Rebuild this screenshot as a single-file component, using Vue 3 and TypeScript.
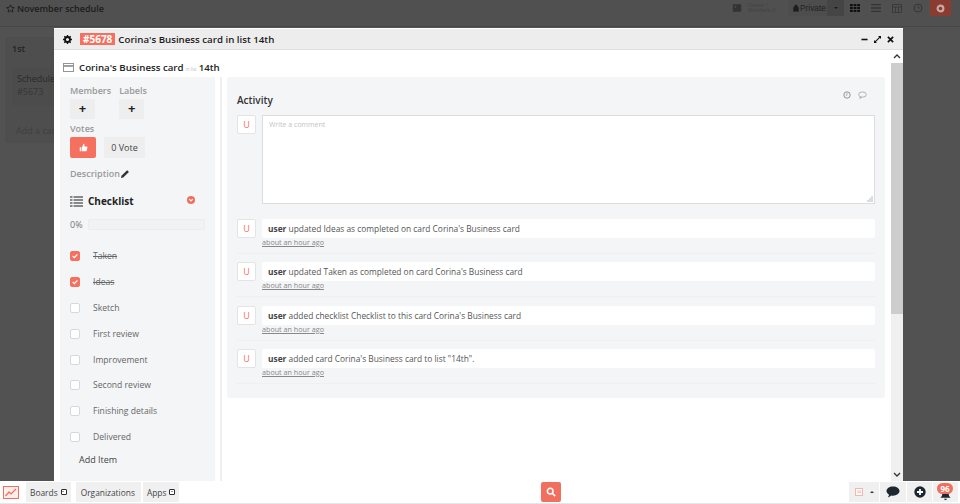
<script setup lang="ts">
const checklist = [
  { label: 'Taken', done: true },
  { label: 'Ideas', done: true },
  { label: 'Sketch', done: false },
  { label: 'First review', done: false },
  { label: 'Improvement', done: false },
  { label: 'Second review', done: false },
  { label: 'Finishing details', done: false },
  { label: 'Delivered', done: false },
]

const activity = [
  'updated Ideas as completed on card Corina\'s Business card',
  'updated Taken as completed on card Corina\'s Business card',
  'added checklist Checklist to this card Corina\'s Business card',
  'added card Corina\'s Business card to list "14th".',
]
</script>

<template>
  <div class="page">
    <header class="topbar">
      <div class="board-title">
        <svg class="star" viewBox="0 0 16 16" width="9" height="9"><path d="M8 1.500l2 4.300 4.700.6-3.400 3.200.9 4.700L8 11.900l-4.200 2.400.9-4.700L1.300 6.400 6 5.800z" fill="none" stroke="#1c1c1c" stroke-width="1.500"/></svg>
        <span>November schedule</span>
      </div>
      <div class="top-tools">
        <svg class="faint-icon" viewBox="0 0 12 12" width="10" height="10"><rect x="1" y="1.500" width="10" height="9" fill="#333"/><rect x="3" y="3.500" width="2" height="2" fill="#4e4e4e"/></svg>
        <div class="members">Owner: 1<br />Members: 0</div>
        <div class="private">
          <svg viewBox="0 0 10 12" width="6" height="8"><path d="M2.500 5V3.500a2.500 2.500 0 0 1 5 0V5M1 5h8v6.500H1z" fill="#1e1e1e" stroke="#1e1e1e"/></svg>
          <span>Private</span>
        </div>
        <div class="caret-box"><i class="caret"></i></div>
        <svg class="tool on" viewBox="0 0 10 8" width="10" height="8"><path d="M0 0h2.800v2.200H0zM3.600 0h2.800v2.200H3.600zM7.200 0H10v2.200H7.200zM0 2.900h2.800v2.200H0zM3.600 2.900h2.800v2.200H3.600zM7.200 2.900H10v2.200H7.200zM0 5.800h2.800V8H0zM3.600 5.800h2.800V8H3.600zM7.200 5.800H10V8H7.200z" fill="#111"/></svg>
        <svg class="tool" viewBox="0 0 10 8" width="10" height="8"><path d="M0 .5h10M0 4h10M0 7.500h10" stroke="#353535" stroke-width="1.300"/></svg>
        <svg class="tool" viewBox="0 0 10 10" width="10" height="10"><path d="M.5 1.500h9v8h-9zM.5 4h9M3.500 4v5.500M6.500 4v5.500" fill="none" stroke="#353535" stroke-width=".8"/></svg>
        <svg class="tool" viewBox="0 0 10 10" width="10" height="10"><circle cx="5" cy="5" r="4" fill="none" stroke="#353535"/><path d="M5 2.500V5h2" fill="none" stroke="#353535" stroke-width=".8"/></svg>
        <div class="gear-btn">
          <svg viewBox="0 0 10 10" width="9" height="9"><circle cx="5" cy="5" r="3.200" fill="none" stroke="#c9a8a3" stroke-width="2.400"/></svg>
        </div>
      </div>
    </header>

    <div class="board">
      <section class="list">
        <h3>1st</h3>
        <div class="card">Schedule<br /><span class="card-no">#5673</span></div>
        <div class="add-card">Add a card</div>
      </section>
    </div>

    <footer class="bottombar">
      <div class="foot-left">
        <div class="logo">
          <svg viewBox="0 0 16 13" width="16" height="13"><rect x=".5" y=".5" width="15" height="12" fill="#fdeeec" stroke="#f16f5e"/><path d="M2.500 10l3.500-4 2 2 5-5" fill="none" stroke="#f16f5e" stroke-width="1.200"/></svg>
        </div>
        <div class="foot-btn">Boards <i class="drop-icon"></i></div>
        <div class="foot-btn">Organizations</div>
        <div class="foot-btn">Apps <i class="drop-icon"></i></div>
      </div>
      <div class="search-btn">
        <svg viewBox="0 0 12 12" width="10" height="10"><circle cx="5" cy="5" r="3.400" fill="none" stroke="#fff" stroke-width="1.800"/><path d="M7.500 7.500L11 11" stroke="#fff" stroke-width="2"/></svg>
      </div>
      <div class="foot-right">
        <div class="user-box"><span class="mini-u">u</span><i class="mini-caret"></i></div>
        <div class="foot-icon chat">
          <svg viewBox="0 0 14 12" width="14" height="12"><path d="M7 .5c3.600 0 6.500 2 6.500 4.600S10.600 9.700 7 9.700c-.7 0-1.300-.1-1.900-.2C4 10.600 2.800 11.200 1.800 11.300c.8-.8 1.200-1.700 1.200-2.600C1.500 7.800.5 6.600.5 5.100.5 2.500 3.400.5 7 .5z" fill="#1d2730"/></svg>
        </div>
        <div class="foot-icon">
          <svg viewBox="0 0 12 12" width="12" height="12"><circle cx="6" cy="6" r="5.700" fill="#1d2730"/><path d="M6 3v6M3 6h6" stroke="#fff" stroke-width="1.800"/></svg>
        </div>
        <div class="foot-icon bell">
          <svg viewBox="0 0 14 13" width="13" height="12"><path d="M7 1c2.500 0 3.500 2 3.500 4.500 0 2 1 3 2 4H1.500c1-1 2-2 2-4C3.500 3 4.500 1 7 1zM5.500 10.500h3a1.500 1.500 0 0 1-3 0z" fill="#1d2730"/></svg>
          <span class="badge">96</span>
        </div>
      </div>
    </footer>

    <div class="modal">
      <div class="modal-head">
        <svg class="cog" viewBox="0 0 12 12" width="9" height="9"><circle cx="6" cy="6" r="3.300" fill="none" stroke="#111" stroke-width="2.500"/><path d="M6 0v2.500M6 9.500V12M0 6h2.500M9.500 6H12M1.800 1.800l1.800 1.800M8.400 8.400l1.800 1.800M1.800 10.200l1.800-1.800M8.400 3.600l1.800-1.800" stroke="#111" stroke-width="1.800"/></svg>
        <span class="card-id">#5678</span>
        <span class="head-title">Corina's Business card in list 14th</span>
        <div class="win-btns">
          <svg viewBox="0 0 8 8" width="7" height="7"><path d="M.5 4h7" stroke="#111" stroke-width="1.800"/></svg>
          <svg viewBox="0 0 8 8" width="7" height="7"><path d="M1 7l6-6" stroke="#111" stroke-width="1.300"/><path d="M4.600 0H8v3.400zM0 4.600V8h3.400z" fill="#111"/></svg>
          <svg viewBox="0 0 8 8" width="7" height="7"><path d="M1 1l6 6M7 1L1 7" stroke="#111" stroke-width="2"/></svg>
        </div>
      </div>

      <div class="modal-body">
        <div class="scroll-area">
          <div class="card-title">
            <svg viewBox="0 0 12 10" width="11" height="9"><rect x=".5" y=".5" width="11" height="9" fill="none" stroke="#8a8a8a"/><rect x="1" y="2.400" width="10" height="1.800" fill="#8a8a8a"/></svg>
            <span class="name">Corina's Business card</span><span class="in-list">in list</span><span class="name">14th</span>
          </div>

          <div class="columns">
            <aside class="side">
              <div class="pick-row">
                <div class="pick">
                  <div class="side-label">Members</div>
                  <div class="plus">+</div>
                </div>
                <div class="pick">
                  <div class="side-label">Labels</div>
                  <div class="plus">+</div>
                </div>
              </div>
              <div class="side-label votes">Votes</div>
              <div class="vote-row">
                <div class="vote-btn">
                  <svg viewBox="0 0 12 12" width="9" height="9"><path d="M1 5.500h2.200V11H1zM4 5.500L6 1c1 0 1.500.8 1.300 1.800L7 4.500h3.300c.7 0 1 .6.900 1.200l-.8 4.300c-.1.600-.5 1-1.100 1H4z" fill="#fff"/></svg>
                </div>
                <div class="vote-count">0 Vote</div>
              </div>
              <div class="desc">
                <span class="side-label">Description</span>
                <svg viewBox="0 0 10 10" width="8" height="8"><path d="M0 10l.6-2.800L7 .8a1 1 0 0 1 1.400 0l.8.8a1 1 0 0 1 0 1.400L2.800 9.400z" fill="#333"/></svg>
              </div>
              <div class="check-head">
                <svg viewBox="0 0 13 11" width="13" height="11"><path d="M0 1h2.500M3.500 1H13M0 4h2.500M3.500 4H13M0 7h2.500M3.500 7H13M0 10h2.500M3.500 10H13" stroke="#666" stroke-width="1.500"/></svg>
                <span>Checklist</span>
                <svg class="chev" viewBox="0 0 8 8" width="8" height="8"><circle cx="4" cy="4" r="4" fill="#f16f5e"/><path d="M2.200 3.200L4 5l1.800-1.800" fill="none" stroke="#fff" stroke-width="1.100"/></svg>
              </div>
              <div class="progress">
                <span>0%</span>
                <div class="track"></div>
              </div>
              <ul class="items">
                <li v-for="item in checklist" :key="item.label">
                  <span class="box" :class="{ checked: item.done }">
                    <svg v-if="item.done" viewBox="0 0 10 10" width="8" height="8"><path d="M2 5l2.200 2L8 3" fill="none" stroke="#fff" stroke-width="1.600"/></svg>
                  </span>
                  <span class="item-label" :class="{ struck: item.done }">{{ item.label }}</span>
                </li>
              </ul>
              <div class="add-item">Add Item</div>
            </aside>

            <div class="divider"></div>

            <main class="activity">
              <div class="activity-head">
                <h4>Activity</h4>
                <svg viewBox="0 0 10 10" width="8" height="8"><circle cx="5" cy="5" r="4" fill="none" stroke="#888" stroke-width="1.100"/><path d="M5 2.500V5L3.500 6" fill="none" stroke="#888" stroke-width=".8"/></svg>
                <svg viewBox="0 0 10 9" width="9" height="8"><ellipse cx="5" cy="4" rx="4.300" ry="3" fill="none" stroke="#999" stroke-width=".8"/><path d="M2.500 6.500L2 8.500l2.200-1.500" fill="none" stroke="#999" stroke-width=".8"/></svg>
              </div>
              <div class="comment-row">
                <div class="avatar">U</div>
                <div class="comment-box">
                  <span>Write a comment</span>
                  <svg class="grip" viewBox="0 0 6 6" width="6" height="6"><path d="M5 1v0M3 3v0M5 3v0M1 5v0M3 5v0M5 5v0" stroke="#777" stroke-width="1" stroke-linecap="square"/></svg>
                </div>
              </div>
              <div v-for="(line, i) in activity" :key="i" class="entry">
                <div class="avatar">U</div>
                <div class="entry-main">
                  <div class="entry-text"><b>user</b> {{ line }}</div>
                  <div class="entry-time">about an hour ago</div>
                </div>
              </div>
            </main>
          </div>
        </div>

        <div class="scrollbar">
          <div class="arrow"><svg viewBox="0 0 8 5" width="8" height="5"><path d="M1 4l3-3 3 3" fill="none" stroke="#333" stroke-width="1.300"/></svg></div>
          <div class="thumb"></div>
          <div class="rail"></div>
          <div class="arrow"><svg viewBox="0 0 8 5" width="8" height="5"><path d="M1 1l3 3 3-3" fill="none" stroke="#333" stroke-width="1.300"/></svg></div>
        </div>
      </div>
    </div>
  </div>
</template>

<style>
html, body { margin: 0; padding: 0; }
</style>

<style scoped>
.page {
  position: relative;
  width: 960px;
  height: 504px;
  overflow: hidden;
  display: flex;
  flex-direction: column;
  background: #525252;
  font-family: "Open Sans", "Liberation Sans", sans-serif;
  font-size: 9px;
  color: #444;
}
.topbar {
  height: 27px;
  box-sizing: border-box;
  flex: none;
  display: flex;
  justify-content: space-between;
  align-items: flex-start;
  padding: 0 9px 0 6px;
  background: #505050;
  border-bottom: 1px solid #474747;
}
.board-title {
  display: flex;
  align-items: center;
  gap: 2px;
  height: 16px;
  font-size: 9px;
  font-weight: 600;
  color: #1c1c1c;
}
.top-tools {
  display: flex;
  align-items: center;
  height: 16px;
}
.faint-icon { margin-right: 6px; }
.members {
  width: 40px;
  font-size: 5px;
  line-height: 5px;
  color: #404040;
}
.private {
  display: flex;
  align-items: center;
  gap: 1px;
  height: 16px;
  width: 39px;
  box-sizing: border-box;
  padding-left: 5px;
  background: #4d4d4d;
  font-family: "Liberation Sans", sans-serif;
  font-size: 8.300px;
  color: #222;
}
.caret-box {
  width: 17px;
  height: 16px;
  background: #454545;
  display: flex;
  align-items: center;
  justify-content: center;
}
.caret {
  border: 2.500px solid transparent;
  border-top-color: #1c1c1c;
  border-bottom: 0;
}
.tool { margin-left: 11px; }
.tool.on { margin-left: 6px; }
.gear-btn {
  width: 21px;
  height: 16px;
  margin-left: 7px;
  background: #8b3c31;
  display: flex;
  align-items: center;
  justify-content: center;
}
.board {
  flex: 1;
  padding: 10px 5px;
  min-height: 0;
}
.list {
  width: 90px;
  height: 106px;
  box-sizing: border-box;
  padding: 5px 7px;
  background: #4e4e4e;
  color: #232323;
}
.list h3 {
  margin: 0 0 13px;
  font-size: 9px;
  font-weight: 600;
}
.card {
  height: 38px;
  padding: 4px 5px;
  box-sizing: border-box;
  background: #4c4c4c;
  font-size: 9px;
  line-height: 13px;
  color: #2a2a2a;
}
.card-no { color: #363636; }
.add-card {
  margin-top: 18px;
  padding-left: 4px;
  color: #3e3e3e;
}
.bottombar {
  height: 23px;
  flex: none;
  position: relative;
  display: flex;
  align-items: center;
  justify-content: space-between;
  background: #fff;
  border-bottom: 1px solid #e6e6e6;
  box-sizing: border-box;
}
.foot-left, .foot-right {
  display: flex;
  align-items: center;
  height: 100%;
}
.logo { width: 26px; padding-left: 3px; box-sizing: border-box; line-height: 0; }
.foot-btn {
  display: flex;
  align-items: center;
  gap: 3px;
  height: 20px;
  margin-right: 2px;
  padding: 0 4px;
  background: #f0f0f0;
  font-size: 8.400px;
  color: #444;
}
.foot-btn:nth-child(2) { margin-right: 5px; }
.foot-btn:nth-child(3) { padding: 0 6px 0 5px; }
.drop-icon {
  position: relative;
  width: 4px;
  height: 4px;
  border: 1.500px solid #2c2c2c;
  border-radius: 1px;
  background: #fff;
}
.drop-icon::after {
  content: "";
  position: absolute;
  left: .5px;
  top: .5px;
  border: 1.500px solid transparent;
  border-top-color: #2c2c2c;
  border-bottom: 0;
}
.search-btn {
  position: absolute;
  left: 541px;
  top: 1px;
  width: 20px;
  height: 20px;
  background: #f16f5e;
  border-radius: 2px;
  display: flex;
  align-items: center;
  justify-content: center;
}
.foot-right { padding-right: 2px; }
.user-box {
  display: flex;
  align-items: center;
  gap: 7px;
  width: 30px;
  height: 20px;
  padding-left: 6px;
  box-sizing: border-box;
  background: #f0f0f0;
}
.mini-u {
  width: 8px;
  height: 8px;
  box-sizing: border-box;
  background: #fff;
  border: 1px solid #f5b5ab;
  color: #f16f5e;
  font-size: 6px;
  line-height: 5px;
  text-align: center;
}
.mini-caret {
  border: 2.500px solid transparent;
  border-bottom-color: #333;
  border-top: 0;
}
.foot-icon {
  position: relative;
  width: 25px;
  height: 20px;
  margin-left: 1px;
  background: #f0f0f0;
  display: flex;
  align-items: center;
  justify-content: center;
}
.foot-icon.chat { width: 26px; }
.bell svg { margin-top: 6px; }
.badge {
  position: absolute;
  left: 4px;
  top: 1px;
  min-width: 16px;
  height: 11px;
  border-radius: 6px;
  background: #f16f5e;
  color: #fff;
  font-size: 8px;
  font-weight: 700;
  line-height: 11px;
  text-align: center;
}
.modal {
  position: absolute;
  left: 54px;
  top: 28px;
  width: 849px;
  height: 453px;
  display: flex;
  flex-direction: column;
  background: #fff;
}
.modal-head {
  flex: none;
  display: flex;
  align-items: center;
  padding: 0 9px;
  background: #ededed;
  border-bottom: 1px solid #dedede;
  border-top: 1px solid #fff;
  height: 20px;
}
.cog { margin-right: 8px; }
.card-id {
  padding: 0 3px;
  height: 12px;
  background: #f5705f;
  color: #fff;
  font-size: 10px;
  font-weight: 700;
  line-height: 12px;
}
.head-title {
  margin-left: 3px;
  font-size: 9.700px;
  font-weight: 600;
  color: #1b1b1b;
}
.win-btns {
  margin-left: auto;
  display: flex;
  gap: 6px;
}
.modal-body {
  flex: 1;
  min-height: 0;
  display: flex;
}
.scroll-area {
  flex: 1;
  min-width: 0;
  overflow: hidden;
}
.card-title {
  display: flex;
  align-items: center;
  height: 27px;
  padding: 7px 0 0 9px;
  box-sizing: border-box;
  color: #222;
}
.card-title svg { margin-right: 5px; }
.name {
  font-size: 9.700px;
  font-weight: 600;
  color: #222;
}
.in-list {
  font-size: 4.500px;
  color: #bbb;
  margin-top: 3px;
  padding: 0 2px;
}
.columns {
  display: flex;
  align-items: flex-start;
}
.side {
  width: 155px;
  height: 420px;
  margin-left: 6px;
  padding: 7px 10px 0;
  box-sizing: border-box;
  background: #f4f5f7;
  flex: none;
}
.pick-row { display: flex; gap: 8px; }
.side-label {
  font-size: 9px;
  font-weight: 600;
  color: #999;
  line-height: 13px;
}
.plus {
  width: 25px;
  height: 20px;
  margin-top: 2px;
  background: #eee;
  color: #222;
  font-size: 13px;
  font-weight: 700;
  line-height: 19px;
  text-align: center;
}
.votes { margin-top: 3px; }
.vote-row {
  display: flex;
  gap: 8px;
  margin-top: 2px;
}
.vote-btn {
  width: 26px;
  height: 21px;
  background: #f5705f;
  border-radius: 2px;
  display: flex;
  align-items: center;
  justify-content: center;
}
.vote-count {
  width: 41px;
  height: 21px;
  background: #eee;
  font-size: 9px;
  line-height: 21px;
  text-align: center;
  color: #444;
}
.desc {
  display: flex;
  align-items: center;
  gap: 1px;
  margin-top: 9px;
}
.check-head {
  display: flex;
  align-items: center;
  gap: 5px;
  margin-top: 14px;
  font-size: 10px;
  font-weight: 700;
  color: #222;
  height: 14px;
}
.chev { margin: -2px 10px 0 auto; }
.progress {
  display: flex;
  align-items: center;
  gap: 5px;
  height: 12px;
  margin-top: 10px;
  color: #777;
}
.track {
  width: 119px;
  height: 11px;
  box-sizing: border-box;
  background: #f1f2f3;
  border: 1px solid #ececec;
  border-radius: 2px;
}
.items {
  list-style: none;
  margin: 13px 0 0;
  padding: 0;
}
.items li {
  display: flex;
  align-items: center;
  gap: 13px;
  height: 25.900px;
  font-size: 8.600px;
  color: #666;
}
.box {
  width: 10px;
  height: 10px;
  box-sizing: border-box;
  border: 1px solid #d8d8d8;
  border-radius: 2px;
  background: #fff;
  display: flex;
  align-items: center;
  justify-content: center;
  flex: none;
}
.box.checked {
  background: #f5705f;
  border-color: #f5705f;
}
.struck { text-decoration: line-through; }
.add-item {
  margin: 3px 0 0 9px;
  font-size: 9px;
  color: #444;
}
.divider {
  width: 2px;
  height: 420px;
  margin: 0 5px;
  background: #efefef;
  flex: none;
}
.activity {
  flex: 1;
  min-width: 0;
  height: 321px;
  margin-right: 6px;
  padding: 0 10px;
  box-sizing: border-box;
  background: #f4f5f7;
  border-radius: 3px;
}
.activity-head {
  display: flex;
  align-items: center;
  gap: 7px;
  height: 38px;
  padding-right: 8px;
  box-sizing: border-box;
}
.activity-head h4 {
  flex: 1;
  margin: 8px 0 0;
  font-size: 10px;
  font-weight: 600;
  color: #333;
}
.activity-head svg { margin-top: -2px; }
.avatar {
  width: 19px;
  height: 19px;
  box-sizing: border-box;
  background: #fff;
  border: 1px solid #e4e4e4;
  border-radius: 2px;
  color: #f5705f;
  font-size: 9px;
  line-height: 17px;
  text-align: center;
  flex: none;
}
.comment-row {
  display: flex;
  gap: 6px;
}
.comment-box {
  position: relative;
  flex: 1;
  height: 89px;
  box-sizing: border-box;
  padding: 4px 6px;
  background: #fff;
  border: 1px solid #ddd;
  font-size: 7px;
  color: #c4c4c4;
}
.grip { position: absolute; right: 1px; bottom: 1px; }
.entry {
  display: flex;
  gap: 6px;
  height: 35px;
  margin-bottom: 8.300px;
  box-sizing: border-box;
  border-bottom: 1px solid #eff0f2;
}
.comment-row + .entry { margin-top: 15px; }
.entry-main { flex: 1; min-width: 0; }
.entry-text {
  height: 19px;
  padding-left: 6px;
  background: #fff;
  border-radius: 2px;
  font-size: 8.370px;
  line-height: 19px;
  color: #555;
}
.entry-text b { font-weight: 700; color: #444; }
.entry-time {
  font-size: 7.200px;
  line-height: 9px;
  color: #888;
  text-decoration: underline;
}
.scrollbar {
  width: 12px;
  flex: none;
  display: flex;
  flex-direction: column;
  background: #f0f0f0;
}
.arrow {
  height: 13px;
  display: flex;
  align-items: center;
  justify-content: center;
}
.scrollbar .arrow:first-child { background: #fff; }
.thumb { height: 251px; background: #cdcdcd; }
.rail { flex: 1; }
</style>
